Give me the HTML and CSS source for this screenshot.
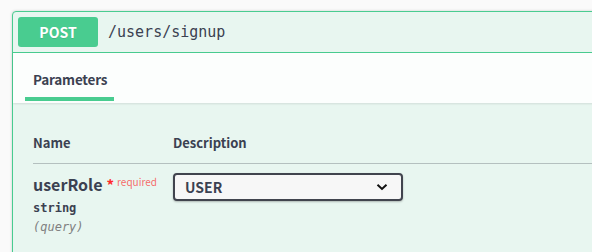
FILE: index.html
```html
<!DOCTYPE html>
<html lang="en">
<head>
    <meta charset="UTF-8">
    <title>POST /users/signup</title>
    <link rel="stylesheet" href="styles.css">
</head>
<body>
    <div class="opblock">
        <div class="opblock-summary">
            <span class="method">POST</span>
            <span class="path">/users/signup</span>
        </div>

        <div class="tab-header">
            <h4 class="tab">Parameters</h4>
        </div>

        <div class="params">
            <div class="params-head">
                <div class="col-name">Name</div>
                <div class="col-desc">Description</div>
            </div>
            <div class="param-row">
                <div class="col-name">
                    <div class="param-name">userRole<span class="star">*</span><span class="req">required</span></div>
                    <div class="param-type">string</div>
                    <div class="param-in">(query)</div>
                </div>
                <div class="col-desc">
                    <div class="select-wrap">
                        <select class="select">
                            <option>USER</option>
                            <option>ADMIN</option>
                        </select>
                        <svg class="chevron" width="12" height="8" viewBox="0 0 12 8">
                            <path d="M1.5 1.8 L6 6 L10.5 1.8" fill="none" stroke="#111" stroke-width="2"/>
                        </svg>
                    </div>
                </div>
            </div>
        </div>
    </div>
</body>
</html>
```

FILE: styles.css
```css
body {
    margin: 0;
    background-color: #fafafa;
    font-family: "Noto Sans CJK KR", "Noto Sans", sans-serif;
    color: #3b4151;
    overflow: hidden;
}
.opblock {
    margin: 11px 0 0 12px;
    width: 700px;
    height: 250px;
    border: 1px solid #49cc90;
    border-radius: 4px;
    background-color: #e8f6f0;
    box-shadow: 0 0 3px rgba(0, 0, 0, 0.19);
}
.opblock-summary {
    display: flex;
    align-items: center;
    padding: 5px;
    height: 30px;
    border-bottom: 1px solid #49cc90;
}
.method {
    width: 80px;
    height: 30px;
    line-height: 30px;
    text-align: center;
    background-color: #49cc90;
    color: #fff;
    border-radius: 3px;
    font-size: 14px;
    font-weight: 700;
    text-shadow: 0 1px 0 rgba(0, 0, 0, 0.1);
}
.path {
    margin-left: 10px;
    font-family: "DejaVu Sans Mono", monospace;
    font-size: 15px;
    color: #3b4151;
}
.tab-header {
    display: flex;
    height: 50px;
    padding-left: 12px;
    background-color: rgba(255, 255, 255, 0.85);
    box-shadow: 0 1px 2px rgba(0, 0, 0, 0.1);
}
.tab {
    margin: 0;
    height: 44px;
    padding: 0 7px 0 8px;
    line-height: 53px;
    font-size: 13.5px;
    font-weight: 700;
    letter-spacing: -0.2px;
    border-bottom: 4px solid #49cc90;
}
.params {
    padding: 0 0 0 20px;
}
.params-head {
    display: flex;
    margin-top: 30px;
    padding-bottom: 11px;
    border-bottom: 1px solid rgba(59, 65, 81, 0.3);
    font-size: 13px;
    font-weight: 600;
}
.col-name {
    width: 140px;
}
.col-desc {
    flex: 1;
}
.param-row {
    display: flex;
    padding-top: 8px;
}
.param-name {
    font-size: 16px;
    font-weight: 700;
    line-height: 24px;
}
.star {
    color: #ff2b2b;
    font-size: 15px;
    margin-left: 4px;
}
.req {
    position: relative;
    top: -5px;
    margin-left: 3px;
    font-size: 10px;
    font-weight: 400;
    color: rgba(255, 0, 0, 0.6);
}
.param-type {
    font-family: "DejaVu Sans Mono", monospace;
    font-size: 12px;
    font-weight: 700;
    line-height: 18px;
}
.param-in {
    font-family: "DejaVu Sans Mono", monospace;
    font-size: 12px;
    font-style: italic;
    color: #808080;
    line-height: 20px;
}
.select-wrap {
    position: relative;
    width: 230px;
    margin-top: 1px;
}
.select {
    appearance: none;
    width: 230px;
    height: 28px;
    padding: 0 40px 0 10px;
    border: 2px solid #41444e;
    border-radius: 4px;
    background-color: #f7f7f7;
    box-shadow: 0 1px 2px rgba(0, 0, 0, 0.25);
    font-family: "Noto Sans CJK KR", "Noto Sans", sans-serif;
    font-size: 14px;
    font-weight: 600;
    color: #3b4151;
}
.chevron {
    position: absolute;
    right: 15px;
    top: 10px;
}
```
